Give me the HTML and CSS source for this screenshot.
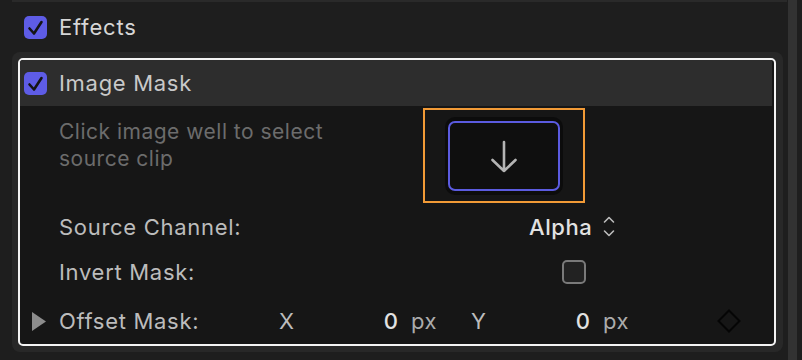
FILE: index.html
```html
<!DOCTYPE html>
<html>
<head>
<meta charset="utf-8">
<link rel="stylesheet" href="styles.css">
</head>
<body>
<div class="page">
  <div class="main">
    <div class="prev-edge"></div>
    <div class="effects-row">
      <span class="cb cb-on"><svg viewBox="0 0 23 23" width="23" height="23"><path d="M5.5 12.5 L10 17.5 L17.5 6" fill="none" stroke="#141414" stroke-width="2.6" stroke-linecap="round" stroke-linejoin="round"/></svg></span>
      <span class="effects-title">Effects</span>
    </div>
    <div class="panel">
      <div class="inner">
        <div class="head">
          <span class="cb cb-on"><svg viewBox="0 0 23 23" width="23" height="23"><path d="M5.5 12.5 L10 17.5 L17.5 6" fill="none" stroke="#141414" stroke-width="2.6" stroke-linecap="round" stroke-linejoin="round"/></svg></span>
          <span class="head-title">Image Mask</span>
        </div>
        <div class="row row-well">
          <div class="desc">Click image well to select<br>source clip</div>
          <div class="well-frame">
            <div class="well-shadow">
              <div class="well">
                <svg width="28" height="34" viewBox="0 0 28 34"><path d="M14 2 V31 M2.5 20 L14 31 L25.5 20" fill="none" stroke="#b4b4b4" stroke-width="2.6" stroke-linecap="round" stroke-linejoin="round"/></svg>
              </div>
            </div>
          </div>
        </div>
        <div class="row row-source">
          <span class="label w-source">Source Channel:</span>
          <span class="value">Alpha</span>
          <svg class="updown" width="14" height="24" viewBox="0 0 14 24"><path d="M2.5 7 L7 2.5 L11.5 7 M2.5 16 L7 20.5 L11.5 16" fill="none" stroke="#bdbdbd" stroke-width="1.6" stroke-linecap="round" stroke-linejoin="round"/></svg>
        </div>
        <div class="row row-invert">
          <span class="label w-invert">Invert Mask:</span>
          <span class="cb cb-off"></span>
        </div>
        <div class="row row-offset">
          <svg class="disclosure" width="14" height="19" viewBox="0 0 14 19"><path d="M0 0 L14 9.5 L0 19 Z" fill="#8c8c8c"/></svg>
          <span class="label w-offset">Offset Mask:</span>
          <span class="axis w-x">X</span>
          <span class="num w-num1">0</span>
          <span class="unit w-unit1">px</span>
          <span class="axis w-y">Y</span>
          <span class="num w-num2">0</span>
          <span class="unit w-unit2">px</span>
          <svg class="keyframe" width="24" height="24" viewBox="0 0 24 24"><path d="M12 1.5 L22.5 12 L12 22.5 L1.5 12 Z" fill="none" stroke="#050505" stroke-width="2"/></svg>
        </div>
      </div>
    </div>
  </div>
  <div class="scrollbar"></div>
</div>
</body>
</html>
```
FILE: styles.css
```css
* { box-sizing: border-box; }
html, body { margin: 0; padding: 0; }
body {
  background: #1e1e1e;
  font-family: "Inter", "Noto Sans", sans-serif;
  width: 802px;
  height: 360px;
  overflow: hidden;
}
.page { display: flex; height: 360px; }
.main { width: 788px; }
.scrollbar { width: 9px; background: #323232; }
.prev-edge { margin-left: 12px; width: 775px; height: 2px; background: #2a2a2a; }

.effects-row {
  height: 50px;
  display: flex;
  align-items: center;
  padding-left: 24px;
  gap: 12px;
}
.effects-title { font-size: 22px; letter-spacing: 0.8px; color: #d6d6d6; }

.cb { display: inline-block; width: 23px; height: 23px; border-radius: 5px; flex: none; }
.cb svg { display: block; }
.cb-on { background: #5e5ce6; }
.cb-off { width: 24px; height: 24px; border: 2px solid #7a7a7a; background: #222; border-radius: 5px; }

.panel {
  margin-left: 12px;
  width: 771px;
  background: #282828;
  border-radius: 8px;
  padding: 6px 7px 6px 6px;
}
.inner {
  border: 2px solid #f4f4f4;
  border-radius: 5px;
  background: #161616;
  height: 288px;
  overflow: hidden;
}
.head {
  height: 46px;
  background: #2d2d2d;
  display: flex;
  align-items: center;
  padding-left: 4px;
  gap: 12px;
  margin-right: 2px;
}
.head-title { font-size: 22px; letter-spacing: 0.7px; color: #c9c9c9; }

.row { display: flex; align-items: center; padding-left: 39px; }
.row-well { height: 99px; align-items: flex-start; }
.desc {
  width: 364px;
  font-size: 21px;
  letter-spacing: 0.5px;
  line-height: 27px;
  color: #6c6c6c;
  padding-top: 12px;
}
.well-frame {
  margin-top: 2px;
  width: 162px;
  height: 95px;
  border: 2px solid #f29a36;
  display: flex;
  align-items: center;
  justify-content: center;
}
.well-shadow {
  width: 118px;
  height: 78px;
  border-radius: 10px;
  background: #0c0c0c;
  display: flex;
  align-items: center;
  justify-content: center;
}
.well {
  width: 112px;
  height: 70px;
  border: 2px solid #5b5be0;
  border-radius: 7px;
  background: #0f0f0f;
  display: flex;
  align-items: center;
  justify-content: center;
}
.well svg { display: block; margin-top: 2px; }

.label { font-size: 22px; letter-spacing: 0.7px; color: #bcbcbc; flex: none; }
.row-source { height: 44px; }
.w-source { width: 470px; }
.value { font-size: 22px; letter-spacing: 0.6px; color: #e2e2e2; font-weight: 500; }
.updown { margin-left: 10px; display: block; }
.row-invert { height: 44px; padding-top: 2px; }
.w-invert { width: 503px; }

.row-offset { height: 53px; padding-left: 12px; padding-top: 3px; }
.disclosure { display: block; margin-right: 13px; flex: none; }
.w-offset { width: 220px; }
.axis { font-size: 22px; color: #bcbcbc; flex: none; }
.num { font-size: 22px; color: #e2e2e2; text-align: right; font-weight: 500; flex: none; }
.unit { font-size: 22px; letter-spacing: 0.5px; color: #acacac; flex: none; }
.w-x { width: 95px; }
.w-num1 { width: 24px; }
.w-unit1 { width: 73px; padding-left: 13px; }
.w-y { width: 95px; }
.w-num2 { width: 24px; }
.w-unit2 { width: 127px; padding-left: 13px; }
.keyframe { display: block; flex: none; }
```
